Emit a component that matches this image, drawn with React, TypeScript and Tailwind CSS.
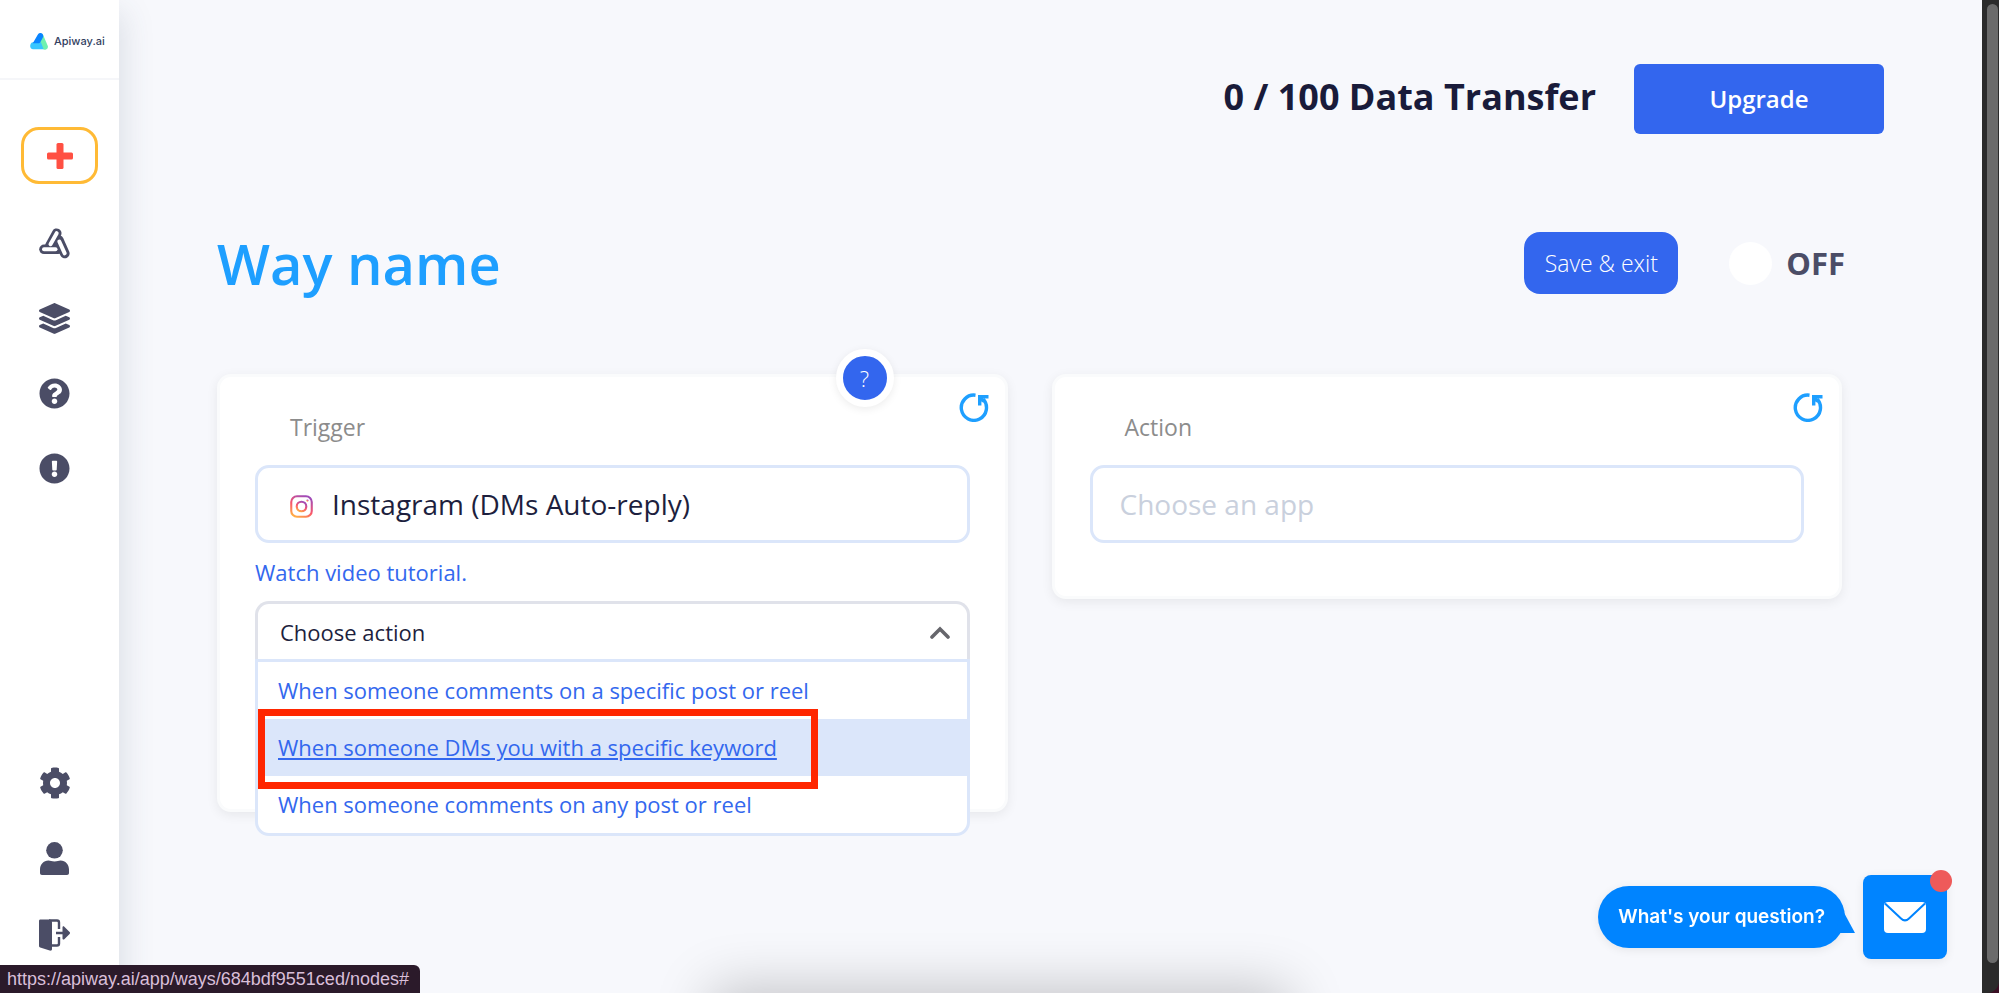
import { useState, type ReactNode } from "react";
import {
  FaCog,
  FaExclamationCircle,
  FaLayerGroup,
  FaQuestionCircle,
} from "react-icons/fa";

const triggerActions = [
  "When someone comments on a specific post or reel",
  "When someone DMs you with a specific keyword",
  "When someone comments on any post or reel",
];

function Logo() {
  return (
    <svg viewBox="0 0 54 52" className="h-[17px] w-[18px]" aria-hidden="true">
      <path
        d="M32 11l13 31"
        stroke="#6ff0b0"
        strokeWidth="18"
        strokeLinecap="round"
      />
      <path d="M9 28h24l8 22H9C3 50 0 46 0 40c0-6 3-12 9-12z" fill="#38c6ff" />
      <path
        d="M24 4c4-6 13-5 15 1 2 4 1 7-1 10l-7 13c-1 2-3 3-5 3H8z"
        fill="#0a84ff"
      />
    </svg>
  );
}

function PlusIcon() {
  return (
    <svg
      viewBox="0 0 26 26"
      className="h-[26px] w-[26px]"
      fill="currentColor"
      aria-hidden="true"
    >
      <rect x="9.500" width="7" height="26" rx="1.500" />
      <rect y="9.500" width="26" height="7" rx="1.500" />
    </svg>
  );
}

function WaysIcon() {
  return (
    <svg
      viewBox="0 0 31 31"
      className="h-[31px] w-[31px]"
      fill="none"
      strokeLinecap="round"
      aria-hidden="true"
    >
      <g stroke="currentColor" strokeWidth="9.600">
        <path d="M17.700 5.200L11 17.500" />
        <path d="M5 21.300H19" />
        <path d="M19.800 12l6 13.500" />
      </g>
      <g stroke="#fff" strokeWidth="4">
        <path d="M17.700 5.200L11.500 16.200" />
        <path d="M5 21.300H16.500" />
        <path d="M20.300 13.500l5.400 11.800" />
      </g>
    </svg>
  );
}

function UserIcon() {
  return (
    <svg viewBox="0 0 29 33" className="h-[33px] w-[29px]" aria-hidden="true">
      <circle cx="14.500" cy="8.300" r="8.300" fill="currentColor" />
      <path
        d="M8.500 18.500c2 0 3 .9 6 .9s4-.9 6-.9c5 0 8.500 4 8.500 9V31c0 1.200-.8 2-2 2H2c-1.200 0-2-.8-2-2v-3.500c0-5 3.500-9 8.500-9z"
        fill="currentColor"
      />
    </svg>
  );
}

function LogoutIcon() {
  return (
    <svg
      viewBox="0 0 31 32"
      className="h-[32px] w-[31px]"
      fill="currentColor"
      aria-hidden="true"
    >
      <path d="M1.500.500H11c1.200.6 2 1.500 2 3V30c0 1.500-1 2-2.300 1.600L1.200 28.500C.4 28.200 0 27.700 0 27V2C0 1 .5.500 1.500.500z" />
      <path
        d="M10 1.500h8c1.300 0 2 .7 2 2V10M20 18v6.500c0 1.300-.7 2-2 2h-5"
        fill="none"
        stroke="currentColor"
        strokeWidth="2.400"
      />
      <path d="M17 12.800h6.500V8.500c0-1 1-1.500 1.800-.8l5.300 5.300c.6.600.6 1.400 0 2l-5.300 5.200c-.8.700-1.800.2-1.800-.8v-4.200H17z" />
    </svg>
  );
}

function InstagramIcon() {
  return (
    <svg
      viewBox="0 0 24 24"
      className="mt-1 h-[23px] w-[23px] shrink-0"
      fill="none"
      stroke="url(#ig)"
      strokeWidth="2.200"
      aria-hidden="true"
    >
      <defs>
        <linearGradient id="ig" x1="0.200" y1="1" x2="0.700" y2="0">
          <stop offset="0" stopColor="#ffae45" />
          <stop offset="0.450" stopColor="#f9576b" />
          <stop offset="1" stopColor="#a04bb8" />
        </linearGradient>
      </defs>
      <rect x="1.300" y="1.300" width="21.400" height="21.400" rx="6" />
      <circle cx="12" cy="12" r="5" />
      <circle cx="18.200" cy="5.800" r="0.500" strokeWidth="1.400" />
    </svg>
  );
}

function ResetIcon() {
  return (
    <svg
      viewBox="0 0 30 29"
      className="h-[29px] w-[30px]"
      fill="none"
      stroke="#1e9fff"
      strokeWidth="3.400"
      aria-hidden="true"
    >
      <path d="M16.500 2.200A12.600 12.600 0 1 0 24 6" />
      <path d="M20.700 12.500V3.700H29.500" />
      <path d="M21.500 4.500l3 4" />
    </svg>
  );
}

function NavLink({ label, children }: { label: string; children: ReactNode }) {
  return (
    <a
      href="#"
      aria-label={label}
      className="flex h-[75px] items-center justify-center text-[#4b4d66]"
    >
      {children}
    </a>
  );
}

function Sidebar() {
  return (
    <aside className="z-10 flex w-[119px] shrink-0 flex-col bg-white shadow-[4px_12px_30px_rgba(60,80,100,0.15)]">
      <a
        href="#"
        className="flex h-20 items-center gap-[6px] border-b-2 border-[#f5f6f9] pt-1 pl-[30px] font-[Inter,sans-serif] text-[11px] font-medium text-[#333f5f]"
      >
        <Logo />
        Apiway.ai
      </a>
      <button
        aria-label="New way"
        className="mx-auto mt-[47px] flex h-[57px] w-[77px] items-center justify-center rounded-[18px] border-3 border-[#ffba35] text-[#ff5043]"
      >
        <PlusIcon />
      </button>
      <nav className="mt-[22px] flex flex-1 flex-col pr-[10px]">
        <NavLink label="Ways">
          <WaysIcon />
        </NavLink>
        <NavLink label="Templates">
          <FaLayerGroup size={31} />
        </NavLink>
        <NavLink label="Help">
          <FaQuestionCircle size={31} />
        </NavLink>
        <NavLink label="Report a problem">
          <FaExclamationCircle size={31} />
        </NavLink>
        <div className="mt-auto flex flex-col gap-px pb-[21px]">
          <NavLink label="Settings">
            <FaCog size={32} />
          </NavLink>
          <NavLink label="Profile">
            <UserIcon />
          </NavLink>
          <NavLink label="Log out">
            <LogoutIcon />
          </NavLink>
        </div>
      </nav>
    </aside>
  );
}

function Card({ children }: { children: ReactNode }) {
  return (
    <section className="relative rounded-[14px] border-3 border-[#fafbfc] bg-white px-[35px] pt-[33px] shadow-[0_3px_12px_rgba(0,0,0,0.07)]">
      <button
        aria-label="Reset"
        className="absolute top-4 right-4 flex"
      >
        <ResetIcon />
      </button>
      {children}
    </section>
  );
}

function ActionSelect() {
  const [open, setOpen] = useState(true);
  const [active, setActive] = useState(1);

  return (
    <div className="relative mt-3">
      <button
        aria-expanded={open}
        onClick={() => setOpen(!open)}
        className="flex h-[60px] w-full items-center justify-between rounded-t-[14px] border-3 border-b-0 border-[#e0e2ea] pr-[17px] pl-[22px] text-[22px] text-[#1d1f3e]"
      >
        Choose action
        <svg
          viewBox="0 0 20 13"
          className="h-[13px] w-[20px]"
          fill="none"
          stroke="#66666c"
          strokeWidth="3.600"
          strokeLinecap="round"
          aria-hidden="true"
        >
          <path d="M2 11l8-8 8 8" />
        </svg>
      </button>
      {open && (
        <ul className="absolute inset-x-0 top-[58px] rounded-b-[14px] border-3 border-[#dbe6fa] bg-white text-[22px] text-[#3368ee]">
          {triggerActions.map((action, i) => (
            <li key={action} onMouseEnter={() => setActive(i)}>
              <a
                href="#"
                className={`flex h-[57px] items-center pl-[20px] underline-offset-2 ${
                  i === active ? "bg-[#dbe6fa] underline" : ""
                }`}
              >
                {action}
              </a>
            </li>
          ))}
          {/* Highlight around the keyword option */}
          <li
            aria-hidden="true"
            className="pointer-events-none absolute top-[47px] left-0 h-[80px] w-[560px] border-7 border-[#ff2600]"
          />
        </ul>
      )}
    </div>
  );
}

function ChatWidget() {
  return (
    <div className="fixed right-[52px] bottom-[34px] z-20 flex items-center gap-[18px] font-[Inter,sans-serif]">
      <button className="relative h-[62px] rounded-full bg-[#0084ff] px-5 text-[19px] font-semibold text-white shadow-[0_2px_10px_rgba(0,0,0,0.08)]">
        What's your question?
        <svg
          viewBox="0 0 20 24"
          className="absolute right-[-10px] bottom-[15px] h-[24px] w-[20px]"
          aria-hidden="true"
        >
          <path d="M7 0l13 24H0z" fill="#0084ff" />
        </svg>
      </button>
      <button
        aria-label="Open chat"
        className="relative flex h-[84px] w-[84px] items-center justify-center rounded-lg bg-[#0084ff] shadow-[0_2px_10px_rgba(0,0,0,0.08)]"
      >
        <svg viewBox="0 0 42 31" className="h-[31px] w-[42px]" aria-hidden="true">
          <rect width="42" height="31" rx="4" fill="#fff" />
          <path
            d="M1 1.500l16 15c2.500 2.400 5.500 2.400 8 0l16-15"
            fill="none"
            stroke="#0084ff"
            strokeWidth="2"
          />
        </svg>
        <span className="absolute -top-[5px] -right-[5px] h-[22px] w-[22px] rounded-full bg-[#ee5a5a]" />
      </button>
    </div>
  );
}

export default function App() {
  return (
    <div className="relative flex min-h-screen overflow-hidden bg-[#3b0f24] font-['Open_Sans',sans-serif]">
      <Sidebar />

      <main className="flex-1 bg-[#f7f8fc] pb-20">
        <header className="flex items-center justify-end gap-[38px] pt-16 pr-[98px]">
          <p className="pb-1 text-[36px] font-bold text-[#191b3a]">
            0 / 100 Data Transfer
          </p>
          <button className="h-[70px] w-[250px] rounded-md bg-[#3366ee] text-[24px] font-semibold text-white">
            Upgrade
          </button>
        </header>

        <div className="mt-[98px] flex items-center pr-[137px] pl-[98px]">
          <h1 className="flex-1 text-[56px] leading-[62px] font-semibold text-[#1e9fff]">
            Way name
          </h1>
          <button className="h-[62px] w-[154px] rounded-2xl bg-[#3366ee] text-[23px] font-light text-white">
            Save & exit
          </button>
          <label className="ml-[51px] flex items-center gap-[14px] text-[31px] leading-[43px] font-bold text-[#4b4d66]">
            <input
              type="checkbox"
              role="switch"
              className="h-[43px] w-[43px] appearance-none rounded-full bg-white"
            />
            OFF
          </label>
        </div>

        <div className="mt-20 grid grid-cols-2 items-start gap-11 pr-[140px] pl-[98px]">
          <Card>
            <button
              aria-label="Trigger help"
              className="absolute -top-[28px] right-[111px] h-[58px] w-[58px] rounded-full border-7 border-white bg-[#3366ee] text-[22px] font-light text-white shadow-[0_2px_8px_rgba(0,0,0,0.08)]"
            >
              ?
            </button>
            <label
              htmlFor="trigger"
              className="block pl-[35px] text-[23px] leading-[34px] text-[#8c8c8c]"
            >
              Trigger
            </label>
            <div className="mt-[21px] flex h-[78px] items-center gap-[19px] rounded-[14px] border-3 border-[#dbe6fa] pr-4 pl-8">
              <InstagramIcon />
              <input
                id="trigger"
                defaultValue="Instagram (DMs Auto-reply)"
                className="min-w-0 flex-1 text-[28px] text-[#1d1f3e] outline-none"
              />
            </div>
            <a
              href="#"
              className="mt-3 block w-fit text-[22px] leading-[34px] text-[#3368ee]"
            >
              Watch video tutorial.
            </a>
            <ActionSelect />
            <div className="h-[148px]" />
          </Card>

          <Card>
            <label
              htmlFor="action"
              className="block pl-[35px] text-[23px] leading-[34px] text-[#8c8c8c]"
            >
              Action
            </label>
            <input
              id="action"
              placeholder="Choose an app"
              className="mt-[21px] mb-[53px] block h-[78px] w-full rounded-[14px] border-3 border-[#dbe6fa] px-[27px] text-[28px] text-[#1d1f3e] outline-none placeholder:text-[#c9d0dd]"
            />
          </Card>
        </div>
      </main>

      {/* Scroll track */}
      <div className="flex w-[17px] shrink-0 rounded-br-xl bg-[#2b2b2b] pt-1 pr-[1px] pb-[30px] pl-[5px]">
        <div className="flex-1 rounded-full bg-[#6b6b6b]" />
      </div>

      {/* Dock shadow */}
      <div className="pointer-events-none absolute top-full left-1/2 h-20 w-[570px] -translate-x-1/2 shadow-[0_0_56px_4px_rgba(0,0,0,0.22)]" />

      <ChatWidget />

      <div className="fixed bottom-0 left-0 z-20 h-[28px] rounded-tr-md bg-[#2b1a2a] pr-[11px] pl-[7px] font-['Liberation_Sans',sans-serif] text-[18px] leading-[28px] text-[#d9bfd9]">
        https://apiway.ai/app/ways/684bdf9551ced/nodes#
      </div>
    </div>
  );
}
